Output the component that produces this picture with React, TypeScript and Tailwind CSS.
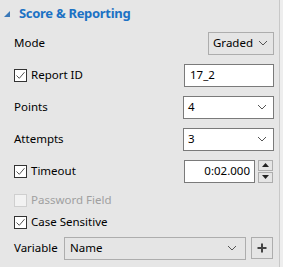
import React from "react";

const Chevron = () => (
  <svg width="10" height="6" viewBox="0 0 10 6" className="shrink-0">
    <path d="M1 1 L5 5 L9 1" fill="none" stroke="#555" strokeWidth="1" />
  </svg>
);

const Check = ({ checked = true, disabled = false }: { checked?: boolean; disabled?: boolean }) => (
  <div
    className={`w-[13px] h-[13px] shrink-0 border flex items-center justify-center ${
      disabled ? "border-[#cfcfcf] bg-[#f2f2f2]" : "border-[#333] bg-white"
    }`}
  >
    {checked && (
      <svg width="11" height="11" viewBox="0 0 11 11">
        <path d="M1.5 5.5 L4.3 8.3 L9.5 2.2" fill="none" stroke="#555" strokeWidth="1" />
      </svg>
    )}
  </div>
);

export default function App() {
  return (
    <div
      className="w-[283px] h-[267px] bg-[#e6e6e6] flex text-black text-[11.5px] overflow-hidden"
      style={{ fontFamily: '"Segoe UI", "Noto Sans", sans-serif' }}
    >
      <div className="w-[279px] flex flex-col">
        {/* Header */}
        <div className="h-[27px] flex items-center pl-[4px]">
          <svg width="6" height="6" viewBox="0 0 6 6" className="mr-[9px] mt-[1px]">
            <path d="M6 0 L6 6 L0 6 Z" fill="#3a78b8" />
          </svg>
          <span className="text-[13px] font-bold tracking-[-0.3px] text-[#1c72c4] leading-none">Score &amp; Reporting</span>
        </div>

        {/* Mode */}
        <div className="h-8 flex items-center pl-[14px] pr-[5px]">
          <span className="flex-1">Mode</span>
          <div className="w-[66px] h-[23px] border border-[#adadad] bg-[#e5e5e5] flex items-center pl-[4px] pr-[5px]">
            <span className="flex-1">Graded</span>
            <Chevron />
          </div>
        </div>

        {/* Report ID */}
        <div className="h-8 flex items-center pl-[14px] pr-[5px]">
          <Check />
          <span className="ml-[4px] flex-1">Report ID</span>
          <div className="w-[90px] h-[23px] border border-[#7a7a7a] bg-white flex items-center pl-[5px]">
            17_2
          </div>
        </div>

        {/* Points */}
        <div className="h-8 flex items-center pl-[14px] pr-[5px]">
          <span className="flex-1">Points</span>
          <div className="w-[91px] h-[23px] border border-[#7a7a7a] bg-white flex items-center pl-[4px] pr-[6px]">
            <span className="flex-1">4</span>
            <Chevron />
          </div>
        </div>

        {/* Attempts */}
        <div className="h-8 flex items-center pl-[14px] pr-[5px]">
          <span className="flex-1">Attempts</span>
          <div className="w-[91px] h-[23px] border border-[#7a7a7a] bg-white flex items-center pl-[4px] pr-[6px]">
            <span className="flex-1">3</span>
            <Chevron />
          </div>
        </div>

        {/* Timeout */}
        <div className="h-8 flex items-center pl-[14px] pr-[6px]">
          <Check />
          <span className="ml-[4px] flex-1">Timeout</span>
          <div className="w-[71px] h-[23px] border border-[#7a7a7a] bg-white flex items-center justify-end pr-[4px]">
            0:02.000
          </div>
          <div className="ml-[3px] w-[15px] flex flex-col gap-[1px]">
            <div className="h-[11px] border border-[#adadad] bg-[#e5e5e5] flex items-center justify-center">
              <svg width="7" height="4" viewBox="0 0 7 4">
                <path d="M0 4 L3.5 0 L7 4 Z" fill="#222" />
              </svg>
            </div>
            <div className="h-[11px] border border-[#adadad] bg-[#e5e5e5] flex items-center justify-center">
              <svg width="7" height="4" viewBox="0 0 7 4">
                <path d="M0 0 L3.5 4 L7 0 Z" fill="#222" />
              </svg>
            </div>
          </div>
        </div>

        <div className="h-[2px]" />

        {/* Password Field */}
        <div className="h-[22px] flex items-center pl-[14px]">
          <Check checked={false} disabled />
          <span className="ml-[4px] text-[#a0a0a0]">Password Field</span>
        </div>

        {/* Case Sensitive */}
        <div className="h-[22px] flex items-center pl-[14px]">
          <Check />
          <span className="ml-[4px]">Case Sensitive</span>
        </div>

        {/* Variable */}
        <div className="h-[30px] flex items-center pl-[14px] pr-[6px]">
          <span className="w-[50px]">Variable</span>
          <div className="flex-1 h-[23px] border border-[#adadad] bg-[#e5e5e5] flex items-center pl-[5px] pr-[8px]">
            <span className="flex-1">Name</span>
            <Chevron />
          </div>
          <div className="ml-[5px] w-[22px] h-[22px] border border-[#adadad] bg-[#e5e5e5] flex items-center justify-center">
            <svg width="10" height="10" viewBox="0 0 10 10">
              <path d="M5 0.5 V9.5 M0.5 5 H9.5" stroke="#444" strokeWidth="2" />
            </svg>
          </div>
        </div>
      </div>
      <div className="w-[4px] border-l border-[#c8c8c8] bg-[#eeeeee]" />
    </div>
  );
}
